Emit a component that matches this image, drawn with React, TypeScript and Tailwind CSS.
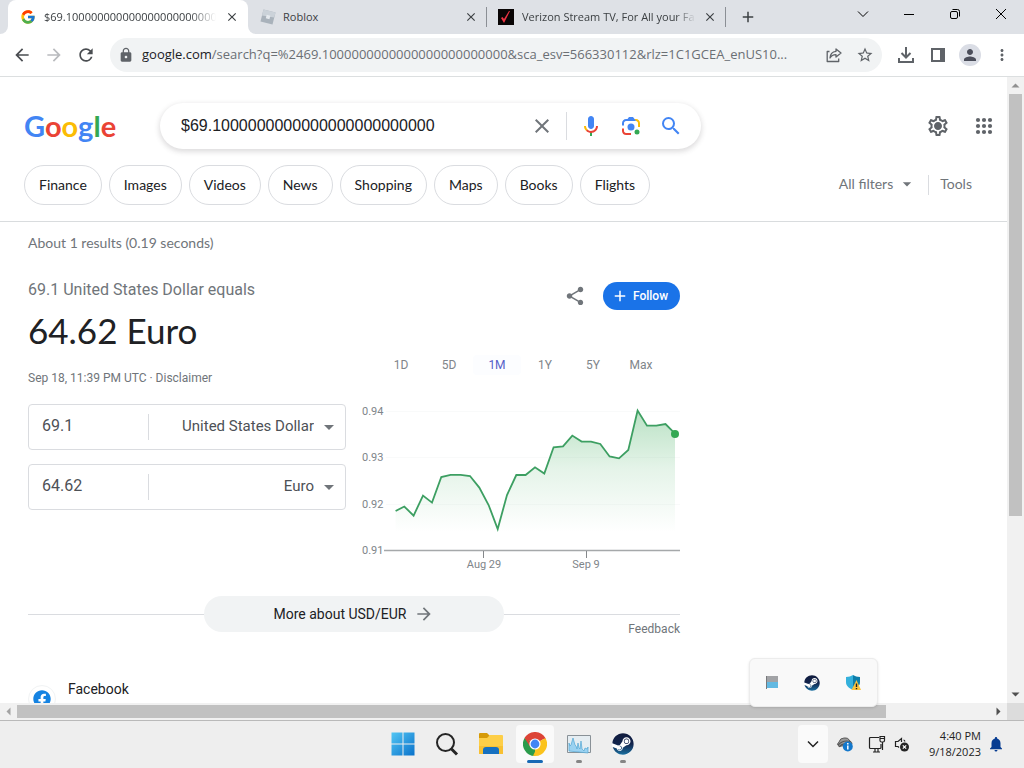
import type { ReactNode } from "react";
import { FaFacebook, FaSteam } from "react-icons/fa";
import { FcGoogle } from "react-icons/fc";
import {
  MdAdd,
  MdArrowBack,
  MdArrowDropDown,
  MdArrowForward,
  MdClose,
  MdLock,
  MdMoreVert,
  MdNotifications,
  MdOutlineSettings,
  MdOutlineStarBorder,
  MdPerson,
  MdRefresh,
  MdSearch,
  MdShare,
} from "react-icons/md";

const zeros = "0".repeat(24);
const chips = ["Finance", "Images", "Videos", "News", "Shopping", "Maps", "Books", "Flights"];
const ranges = ["1D", "5D", "1M", "1Y", "5Y", "Max"];

const ui = "font-['Open_Sans','Noto_Sans',sans-serif]";
const google = "font-['Lato',sans-serif]";

function IconButton({ label, className = "", children }: { label: string; className?: string; children: ReactNode }) {
  return (
    <button aria-label={label} className={`flex shrink-0 items-center justify-center ${className}`}>
      {children}
    </button>
  );
}

function Steam({ className }: { className: string }) {
  return (
    <span className={`flex items-center justify-center rounded-full bg-white ${className}`}>
      <svg width="0" height="0" className="absolute">
        <defs>
          <linearGradient id="steam" x1="0" y1="0" x2="0" y2="1">
            <stop offset="0" stopColor="#101b3d" />
            <stop offset="0.5" stopColor="#12244c" />
            <stop offset="1" stopColor="#1b6f9f" />
          </linearGradient>
        </defs>
      </svg>
      <FaSteam className="size-full" fill="url(#steam)" />
    </span>
  );
}

function TabStrip() {
  return (
    <div className={`flex h-[34px] shrink-0 bg-[#dee1e6] text-[11px] text-[#3c4043] ${ui}`}>
      <div className="w-2 shrink-0 bg-white">
        <div className="h-full rounded-br-lg bg-[#dee1e6]" />
      </div>
      <div className="flex w-60 shrink-0 items-center rounded-t-lg bg-white pr-2 pl-3">
        <FcGoogle className="size-4 shrink-0" />
        <span className="ml-2 min-w-0 flex-1 overflow-hidden whitespace-nowrap [mask-image:linear-gradient(to_right,black_85%,transparent)]">
          $69.1{zeros}
        </span>
        <IconButton label="Close tab" className="ml-2 size-4"><MdClose className="size-3.5" /></IconButton>
      </div>
      <div className="w-60 shrink-0 bg-white">
        <div className="flex h-full items-center rounded-bl-lg bg-[#dee1e6] pr-px pl-3">
          <svg viewBox="0 0 16 16" className="size-4 shrink-0">
            <path d="M3.5 .5 15.5 3.5 12.5 15.5 .5 12.5Z" fill="#a9b2bb" />
            <path d="M3.5 .5 15.5 3.5 14.2 8.5 2 6.5Z" fill="#cbd2d9" />
            <path d="m6.7 5.8 3.7 1-1 3.5-3.6-1Z" fill="#e6eaef" />
          </svg>
          <span className="ml-[7px] flex-1">Roblox</span>
          <IconButton label="Close tab" className="size-4"><MdClose className="size-3.5" /></IconButton>
          <span className="ml-[7px] h-5 w-px bg-[#8b8f95]" />
        </div>
      </div>
      <div className="flex w-[238px] shrink-0 items-center pl-2.5">
        <svg viewBox="0 0 16 16" className="size-4 shrink-0">
          <path d="M0 0h16v16H0z" fill="#090505" />
          <path d="m3 9 3 5L12 2h-1L6 10 4.5 8Z" fill="#ee3344" />
        </svg>
        <span className="ml-2 w-[174px] overflow-hidden whitespace-nowrap [mask-image:linear-gradient(to_right,black_88%,transparent)]">
          Verizon Stream TV, For All your Fa
        </span>
        <IconButton label="Close tab" className="ml-1.5 size-4"><MdClose className="size-3.5" /></IconButton>
        <span className="ml-[7px] h-5 w-px bg-[#8b8f95]" />
      </div>
      <IconButton label="New tab" className="ml-1.5 w-8"><MdAdd className="size-[18px]" /></IconButton>
      <div className="ml-auto flex text-black">
        <IconButton label="Search tabs" className="w-[46px] pb-1.5">
          <svg viewBox="0 0 12 12" className="size-3 fill-none stroke-current"><path d="m1 3.5 5 5 5-5" /></svg>
        </IconButton>
        <IconButton label="Minimize" className="w-[46px] pb-1.5">
          <svg viewBox="0 0 12 12" className="size-3 fill-none stroke-current"><path d="M1 6.5h10" /></svg>
        </IconButton>
        <IconButton label="Restore" className="w-[46px] pb-1.5">
          <svg viewBox="0 0 12 12" className="size-3 fill-none stroke-current">
            <rect x="1.5" y="3.5" width="7" height="7" rx="1.5" />
            <path d="M3.5 1.5h5a2 2 0 0 1 2 2v5" />
          </svg>
        </IconButton>
        <IconButton label="Close" className="w-[46px] pb-1.5">
          <svg viewBox="0 0 12 12" className="size-3 fill-none stroke-current"><path d="m1 1 10 10M11 1 1 11" /></svg>
        </IconButton>
      </div>
    </div>
  );
}

function Toolbar() {
  return (
    <div className="flex h-[43px] shrink-0 items-center border-b border-[#dcdfe0] bg-white pr-[13px] pl-3 text-[#5f6368]">
      <IconButton label="Back" className="size-5"><MdArrowBack className="size-5 text-[#4a4d51]" /></IconButton>
      <IconButton label="Forward" className="ml-3 size-5"><MdArrowForward className="size-5 text-[#b9bbbe]" /></IconButton>
      <IconButton label="Reload" className="ml-3 size-5"><MdRefresh className="size-5 text-[#4a4d51]" /></IconButton>
      <div className="ml-3.5 flex h-[34px] min-w-0 flex-1 items-center rounded-full bg-[#f1f3f4] pr-2 pl-2">
        <MdLock className="size-4 shrink-0" />
        <a href="#url" className={`ml-2 min-w-0 flex-1 overflow-hidden text-[13px] whitespace-nowrap text-[#6b6f74] ${ui}`}>
          <span className="text-[#202124]">google.com</span>/search?q=%2469.1{zeros}&amp;sca_esv=566330112&amp;rlz=1C1GCEA_enUS10...
        </a>
        <IconButton label="Share page" className="size-4">
          <svg viewBox="0 0 16 16" className="size-4 fill-none stroke-current" strokeWidth="1.3" strokeLinejoin="round">
            <path d="M3.5 4.5H1.2v10h11.5v-3M10 2l5 4-5 4V7.7C7 7.6 5.300 8.800 4 11c.2-4 2.500-6.300 6-6.700Z" />
          </svg>
        </IconButton>
        <IconButton label="Bookmark" className="ml-3.5 size-[18px]"><MdOutlineStarBorder className="size-[18px]" /></IconButton>
      </div>
      <IconButton label="Downloads" className="ml-[15px] size-[18px]">
        <svg viewBox="0 0 18 18" className="size-[18px] fill-none stroke-current" strokeWidth="2">
          <path d="M9 1v10M4.500 7 9 11.500 13.500 7M2 12v4h14v-4" />
        </svg>
      </IconButton>
      <IconButton label="Side panel" className="ml-4 size-3.5">
        <svg viewBox="0 0 14 14" className="size-3.5">
          <path d="M1 1h12v12H1Z" fill="none" stroke="currentColor" strokeWidth="2" />
          <path d="M9 1h5v12H9Z" fill="currentColor" />
        </svg>
      </IconButton>
      <IconButton label="Profile" className="ml-3.5 size-[22px] rounded-full bg-[#dadde5]"><MdPerson className="size-[18px] text-[#4a4d5a]" /></IconButton>
      <IconButton label="Menu" className="ml-3 size-[18px]"><MdMoreVert className="size-[18px]" /></IconButton>
    </div>
  );
}

function SearchHeader() {
  return (
    <header className={`border-b border-[#d9dcde] pt-[26px] pr-[11px] pb-4 pl-6 ${google}`}>
      <div className="flex h-[46px] items-center">
        <a href="#home" aria-label="Google" className="w-[136px] text-[29px] leading-[46px] font-bold">
          <span className="text-[#4285f4]">G</span>
          <span className="text-[#ea4335]">o</span>
          <span className="text-[#fbbc05]">o</span>
          <span className="text-[#4285f4]">g</span>
          <span className="text-[#34a853]">l</span>
          <span className="text-[#ea4335]">e</span>
        </a>
        <form className="flex h-[46px] w-[541px] items-center rounded-full bg-white pr-[18px] pl-[21px] shadow-[0_2px_5px_1px_rgba(64,60,67,0.17)]">
          <input
            aria-label="Search"
            defaultValue={`$69.1${zeros}`}
            className="min-w-0 flex-1 font-['Liberation_Sans',sans-serif] text-base text-[#202124] outline-none"
          />
          <IconButton label="Clear" className="size-6 text-[#70757a]"><MdClose className="size-6" /></IconButton>
          <span className="ml-3 h-7 w-px bg-[#dadce0]" />
          <IconButton label="Search by voice" className="ml-3 size-6">
            <svg viewBox="0 0 24 24" className="size-6">
              <path fill="#4285f4" d="m12 15c1.66 0 3-1.31 3-2.97v-7.02c0-1.66-1.34-3.01-3-3.01s-3 1.34-3 3.01v7.02c0 1.66 1.34 2.97 3 2.97z" />
              <path fill="#34a853" d="m11 18.08h2v3.92h-2z" />
              <path fill="#fbbc04" d="m7.05 16.87c-1.27-1.33-2.05-2.83-2.05-4.87h2c0 1.45 0.56 2.42 1.47 3.38v0.32l-1.15 1.18z" />
              <path fill="#ea4335" d="m12 16.93a4.97 5.25 0 0 1 -3.54 -1.55l-1.41 1.49c1.26 1.34 3.02 2.13 4.95 2.13 3.87 0 6.99-2.92 6.99-7h-1.99c0 2.92-2.24 4.93-5 4.93z" />
            </svg>
          </IconButton>
          <IconButton label="Search by image" className="ml-4 size-6">
            <svg viewBox="0 0 192 192" className="size-6">
              <circle fill="#34a853" cx="144" cy="144" r="20" />
              <circle fill="#4285f4" cx="96" cy="104" r="28" />
              <path fill="#ea4335" d="M24 135c0 18 15 33 33 33h39v-16H56c-9 0-16-8-16-18v-18H24Z" />
              <path fill="#fbbc04" d="M168 73c0-18-15-33-33-33h-19l20 16c9 0 16 8 16 18v30h16Z" />
              <path fill="#4285f4" d="M112 24H80L68 40H57c-18 0-33 15-33 33v19h16V74c0-10 7-18 16-18h80Z" />
            </svg>
          </IconButton>
          <IconButton label="Google Search" className="ml-4 size-6 text-[#4285f4]"><MdSearch className="size-6" /></IconButton>
        </form>
        <IconButton label="Settings" className="ml-auto size-6 text-[#5f6368]">
          <span className="relative flex size-6 items-center justify-center">
            <MdOutlineSettings className="size-6" />
            <span className="absolute size-1.5 rounded-full bg-[#5f6368]" />
          </span>
        </IconButton>
        <IconButton label="Google apps" className="ml-[22px] size-6 text-[#5f6368]">
          <svg viewBox="0 0 24 24" className="size-6 fill-current">
            {[6, 12, 18].map((y) => [6, 12, 18].map((x) => <circle key={`${x}-${y}`} cx={x} cy={y} r="2.1" />))}
          </svg>
        </IconButton>
      </div>
      <nav className="mt-4 flex items-center gap-[7px] text-sm text-[#202124]">
        {chips.map((c) => (
          <a key={c} href={`#${c}`} className="flex h-10 items-center rounded-full border border-[#dadce0] px-3.5">{c}</a>
        ))}
        <button className="mb-0.5 ml-auto flex items-center gap-1 text-[#70757a]">
          All filters <MdArrowDropDown className="size-5" />
        </button>
        <span className="ml-1 h-5 w-px bg-[#dadce0]" />
        <button className="mr-6 mb-0.5 ml-1 text-[#70757a]">Tools</button>
      </nav>
    </header>
  );
}

function CurrencyRow({ amount, options, label }: { amount: string; options: string[]; label: string }) {
  return (
    <div className="flex h-[46px] items-center rounded border border-[#dadce0] text-[#4d5156]">
      <input aria-label={`${label} amount`} defaultValue={amount} className="w-[119px] pb-0.5 pl-[13px] text-base outline-none" />
      <span className="h-[26px] w-px bg-[#dadce0]" />
      <div className="relative flex-1">
        <select aria-label={`${label} currency`} className="w-full appearance-none bg-transparent pr-[31px] pb-0.5 text-[15px] outline-none [text-align-last:right]">
          {options.map((o) => <option key={o}>{o}</option>)}
        </select>
        <svg viewBox="0 0 10 5" className="pointer-events-none absolute top-1/2 right-[11px] -mt-0.5 h-[5px] w-2.5 fill-[#70757a]"><path d="M0 0h10L5 5Z" /></svg>
      </div>
    </div>
  );
}

const line =
  "395.600,511 404.300,506.500 413.600,515.600 423,495.600 432,502.600 441.300,477 450.600,474.800 460.600,474.800 470,476 479.300,487.600 488.600,505 497.700,529 507,495 516.300,475 525.600,475 535,467.300 544.300,473.600 553.600,447.300 563,446.300 572.300,435.600 581.600,441.600 591,441.600 600.300,444 609.600,456.500 619,458.300 628.300,450 637.600,410.500 647,425.700 656.300,425.700 665.500,424 675,433.700";

function RateChart() {
  return (
    <svg viewBox="360 400 320 175" className="block h-[175px] w-80 font-['Roboto',sans-serif] text-[11px]" role="img" aria-label="USD to EUR, one month">
      <defs>
        <linearGradient id="area" gradientUnits="userSpaceOnUse" x1="0" y1="405" x2="0" y2="532">
          <stop offset="0" stopColor="#34a853" stopOpacity="0.36" />
          <stop offset="0.5" stopColor="#34a853" stopOpacity="0.13" />
          <stop offset="1" stopColor="#34a853" stopOpacity="0" />
        </linearGradient>
      </defs>
      <path d="M386 411.500H680M386 457.500H680M386 504.500H680" stroke="#f9fafa" />
      <polygon points={`395.600,550 ${line} 675,550`} fill="url(#area)" />
      <path d="M384 550.500H680" stroke="#a5a8aa" strokeWidth="1.500" />
      <path d="M483.500 551v7M586.500 551v7" stroke="#85888b" />
      <polyline points={line} fill="none" stroke="#3d9f62" strokeWidth="1.800" />
      <circle cx="675" cy="434" r="4" fill="#34a853" />
      <g fill="#80858a">
        <text x="362" y="415">0.94</text>
        <text x="362" y="461">0.93</text>
        <text x="362" y="508">0.92</text>
        <text x="362" y="554">0.91</text>
        <text x="484" y="568" textAnchor="middle">Aug 29</text>
        <text x="586" y="568" textAnchor="middle">Sep 9</text>
      </g>
    </svg>
  );
}

function Converter() {
  return (
    <section className="mt-[26px] w-[652px]">
      <div className="flex h-[34px] items-center">
        <span className="flex-1 pb-3 text-base text-[#70757a]">69.1 United States Dollar equals</span>
        <IconButton label="Share" className="size-6 text-[#70757a]"><MdShare className="size-[22px]" /></IconButton>
        <button className="ml-4 flex h-7 w-[77px] items-center justify-center gap-1 rounded-full bg-[#1a73e8] pr-1 text-xs font-medium text-white">
          <MdAdd className="size-[18px]" /> Follow
        </button>
      </div>
      <div className="flex justify-between">
        <div className="w-[318px]">
          <h1 className={`text-[35px] leading-[34px] text-[#202124] ${google}`}>64.62 Euro</h1>
          <p className="mt-[23px] text-xs leading-4 text-[#70757a]">
            Sep 18, 11:39 PM UTC · <a href="#disclaimer">Disclaimer</a>
          </p>
          <div className="mt-[18px] flex flex-col gap-3.5">
            <CurrencyRow label="From" amount="69.1" options={["United States Dollar"]} />
            <CurrencyRow label="To" amount="64.62" options={["Euro"]} />
          </div>
        </div>
        <div className="w-80 pt-[42px]">
          <div className="flex pl-[17px] text-xs text-[#80858a]">
            {ranges.map((r) => (
              <button key={r} className={`h-5 w-12 rounded ${r === "1M" ? "bg-[#fcfdff] text-[#5660c8]" : ""}`}>{r}</button>
            ))}
          </div>
          <div className="mt-[25px]"><RateChart /></div>
        </div>
      </div>
      <div className="mt-[21px] flex items-center">
        <span className="h-px flex-1 bg-[#dadce0]" />
        <a href="#more" className="flex h-9 w-[300px] items-center justify-center gap-2 rounded-full bg-[#f1f3f4] text-sm text-[#202124]">
          More about USD/EUR <MdArrowForward className="size-5 text-[#70757a]" />
        </a>
        <span className="h-px flex-1 bg-[#dadce0]" />
      </div>
      <a href="#feedback" className="-mt-[11px] block text-right text-xs leading-4 text-[#70757a]">Feedback</a>
    </section>
  );
}

function TrayPopup() {
  return (
    <div className="absolute right-[146px] bottom-[61px] flex h-[49px] w-[129px] items-center justify-between rounded-md border border-[#ececec] bg-[#f9f9f9] px-4 shadow-sm">
      <svg viewBox="0 0 12 13" className="h-[13px] w-3">
        <path d="M0 0h12v6H0Z" fill="#a2a3a6" />
        <path d="M1 6h11v6H1Z" fill="#62b9e2" />
        <path d="M.5 0v13" stroke="#77797c" />
      </svg>
      <Steam className="size-4" />
      <svg viewBox="0 0 16 17" className="h-[17px] w-4">
        <path d="M8 1c-2 1-4 2-7 2v5c0 4 3 6 7 8Z" fill="#35b1dc" />
        <path d="M8 1c2 1 4 2 7 2v5c0 4-3 6-7 8Z" fill="#0d7eaa" />
        <path d="m11.500 6 4.500 10H6.500Z" fill="#fbc33c" />
        <path d="M11.500 9.500v3.500M11.500 14v1.200" stroke="#222" strokeWidth="1.400" />
      </svg>
    </div>
  );
}

function Taskbar() {
  return (
    <footer className={`relative flex h-12 shrink-0 items-center border-t border-[#b9b9b9] bg-[#eeeeee] pb-0.5 ${ui}`}>
      <div className="flex flex-1 items-center justify-center gap-1.5 pl-[227px]">
        <IconButton label="Start" className="size-[38px]">
          <svg viewBox="0 0 24 24" className="size-6">
            <defs>
              <linearGradient id="win" x1="0" y1="0" x2="24" y2="24" gradientUnits="userSpaceOnUse">
                <stop stopColor="#54c8f5" /><stop offset="1" stopColor="#0870ca" />
              </linearGradient>
            </defs>
            <path d="M.5.5h11v11H.5zM12.500.5h11v11h-11zM.5 12.500h11v11H.5zM12.500 12.500h11v11h-11z" fill="url(#win)" />
          </svg>
        </IconButton>
        <IconButton label="Search" className="size-[38px]">
          <svg viewBox="0 0 24 24" className="size-6 fill-none stroke-[#252525]">
            <circle cx="10.500" cy="10.500" r="8.500" strokeWidth="2" />
            <path d="m16.500 17 5.500 5.500" strokeWidth="3" />
          </svg>
        </IconButton>
        <IconButton label="File Explorer" className="size-[38px]">
          <svg viewBox="0 0 26 24" className="h-6 w-[26px]">
            <path d="M1 2q0-1 1-1h7l3 3-3 3H1Z" fill="#d69a08" />
            <path d="M1 6h8l3-3h12q1 0 1 1v18H1Z" fill="#fdce47" />
            <path d="M1 14h24v8H1Z" fill="#f8c032" />
            <path d="M5 22v-4q0-3 3-3h10q3 0 3 3v4Z" fill="#1670c0" />
          </svg>
        </IconButton>
        <IconButton label="Chrome" className="relative size-[38px] rounded bg-[#fafafa]">
          <svg viewBox="0 0 24 24" className="size-6">
            <path d="M12 12 1.600 6A12 12 0 0 1 22.400 6Z" fill="#dc4437" />
            <path d="M12 12 22.400 6A12 12 0 0 1 12 24Z" fill="#fbc31d" />
            <path d="M12 12v12A12 12 0 0 1 1.600 6Z" fill="#2b9b4b" />
            <path d="M12 6.500h10.700L22.400 6H12Z" fill="#dc4437" />
            <path d="m7.200 14.800-5.600-8.800 1-1.500 6 7.500Z" fill="#dc4437" />
            <path d="M16.800 14.800 12 24l-2-.2 3.500-7Z" fill="#fbc31d" />
            <circle cx="12" cy="12" r="5.600" fill="#fff" />
            <circle cx="12" cy="12" r="4.400" fill="#4285f4" />
          </svg>
          <span className="absolute bottom-0 h-[3px] w-4 rounded-full bg-[#1769b5]" />
        </IconButton>
        <IconButton label="Resource Monitor" className="relative size-[38px]">
          <svg viewBox="0 0 24 20" className="h-5 w-6">
            <path d="M.5 1.500h23v17H.5Z" fill="#e5edf2" stroke="#899197" />
            <path d="M2 17V9l1 3 1-1 2-7 2 7 1 1 1 3 1-6 1 5 1 1 1-8 1 8 2 2 1-3 2 1 1-2v6Z" fill="#9bd2f1" stroke="#52a6d4" strokeWidth=".7" />
          </svg>
          <span className="absolute bottom-0 h-[3px] w-1.5 rounded-full bg-[#858585]" />
        </IconButton>
        <IconButton label="Steam" className="relative size-[38px]">
          <Steam className="size-[22px]" />
          <span className="absolute bottom-0 h-[3px] w-1.5 rounded-full bg-[#858585]" />
        </IconButton>
      </div>
      <div className="flex w-[226px] shrink-0 items-center text-[#222]">
        <IconButton label="Show hidden icons" className="h-[38px] w-[30px] rounded bg-[#fafafa]">
          <svg viewBox="0 0 12 12" className="size-3 fill-none stroke-current" strokeWidth="1.500"><path d="m1 3.500 5 5 5-5" /></svg>
        </IconButton>
        <svg viewBox="0 0 18 16" className="ml-2 h-4 w-[18px]">
          <path d="M3 10.500Q0 8 3 6q1-4 5-4 4-1 6 3 2 1 2 3Z" fill="#9a9a9a" stroke="#5d5d5d" />
          <path d="M2 9Q8 3 15 6M3 11q3-4 9-3" fill="none" stroke="#575757" strokeWidth="1.200" />
          <circle cx="11.800" cy="10.500" r="5" fill="#1478cc" />
          <path d="M11.800 7v1.600M11.800 9.500v4" stroke="#fff" strokeWidth="1.500" />
        </svg>
        <svg viewBox="0 0 18 18" className="ml-3.5 size-[18px] fill-none stroke-current" strokeWidth="1.200">
          <path d="M11 2.500H2.500q-1 0-1 1v9q0 1 1 1H12q1 0 1-1V9M5 17h7M7 13.500V17M10 13.500V17" />
          <path d="M12 1.500h4.500v4q0 1.500-1.500 1.500h-1.500Q12 7 12 5.500ZM14.500 7v8M12.500 3.500h4" />
        </svg>
        <svg viewBox="0 0 16 16" className="ml-2 size-4 fill-none stroke-current">
          <path d="M7.500 6V2.500L4 5.500H1.500v5H4l1 1M9.500 4q1 0 1.500 1.500" strokeWidth="1.200" />
          <circle cx="10.500" cy="11" r="4.500" fill="#252525" stroke="none" />
          <path d="m8.800 9.300 3.400 3.400M12.200 9.300l-3.400 3.400" stroke="#fff" strokeWidth="1.200" />
        </svg>
        <div className="ml-auto text-right text-[11px] leading-4">
          <div>4:40 PM</div>
          <div>9/18/2023</div>
        </div>
        <MdNotifications className="mr-[19px] ml-1.5 size-[18px] text-[#073c91]" />
      </div>
      <TrayPopup />
    </footer>
  );
}

export default function App() {
  return (
    <div className="flex h-screen min-w-0 flex-col overflow-hidden bg-white font-['Roboto',sans-serif]">
      <TabStrip />
      <Toolbar />
      <div className="flex min-h-0 flex-1">
        <main className="min-w-0 flex-1 overflow-hidden">
          <SearchHeader />
          <div className="pt-[11px] pl-7">
            <p className={`text-sm leading-5 text-[#70757a] ${google}`}>About 1 results (0.19 seconds)</p>
            <Converter />
            <article className="mt-11 flex">
              <span className="mt-1 flex size-7 items-center justify-center rounded-full border border-[#f1f3f4]">
                <FaFacebook className="size-[18px] text-[#1583e2]" />
              </span>
              <a href="#facebook" className="ml-3 text-sm leading-4 text-[#202124]">Facebook</a>
            </article>
          </div>
        </main>
        <div className="flex w-[17px] shrink-0 flex-col items-center bg-[#f1f1f1]">
          <svg viewBox="0 0 17 17" className="size-[17px] fill-[#909090]"><path d="M4.500 10.500h8l-4-4Z" /></svg>
          <div className="min-h-0 w-[13px] flex-[422] bg-[#c1c1c1]" />
          <div className="flex-[170]" />
          <svg viewBox="0 0 17 17" className="size-[17px] fill-[#505050]"><path d="M4.500 6.500h8l-4 4Z" /></svg>
        </div>
      </div>
      <div className="flex h-[17px] shrink-0 items-center bg-[#f1f1f1]">
        <svg viewBox="0 0 17 17" className="size-[17px] fill-[#a3a3a3]"><path d="M10.500 4.500v8l-4-4Z" /></svg>
        <div className="h-[13px] flex-[869] bg-[#c1c1c1]" />
        <div className="flex-[104]" />
        <svg viewBox="0 0 17 17" className="size-[17px] fill-[#505050]"><path d="M6.500 4.500v8l4-4Z" /></svg>
        <div className="size-[17px] bg-[#dcdcdc]" />
      </div>
      <Taskbar />
    </div>
  );
}
